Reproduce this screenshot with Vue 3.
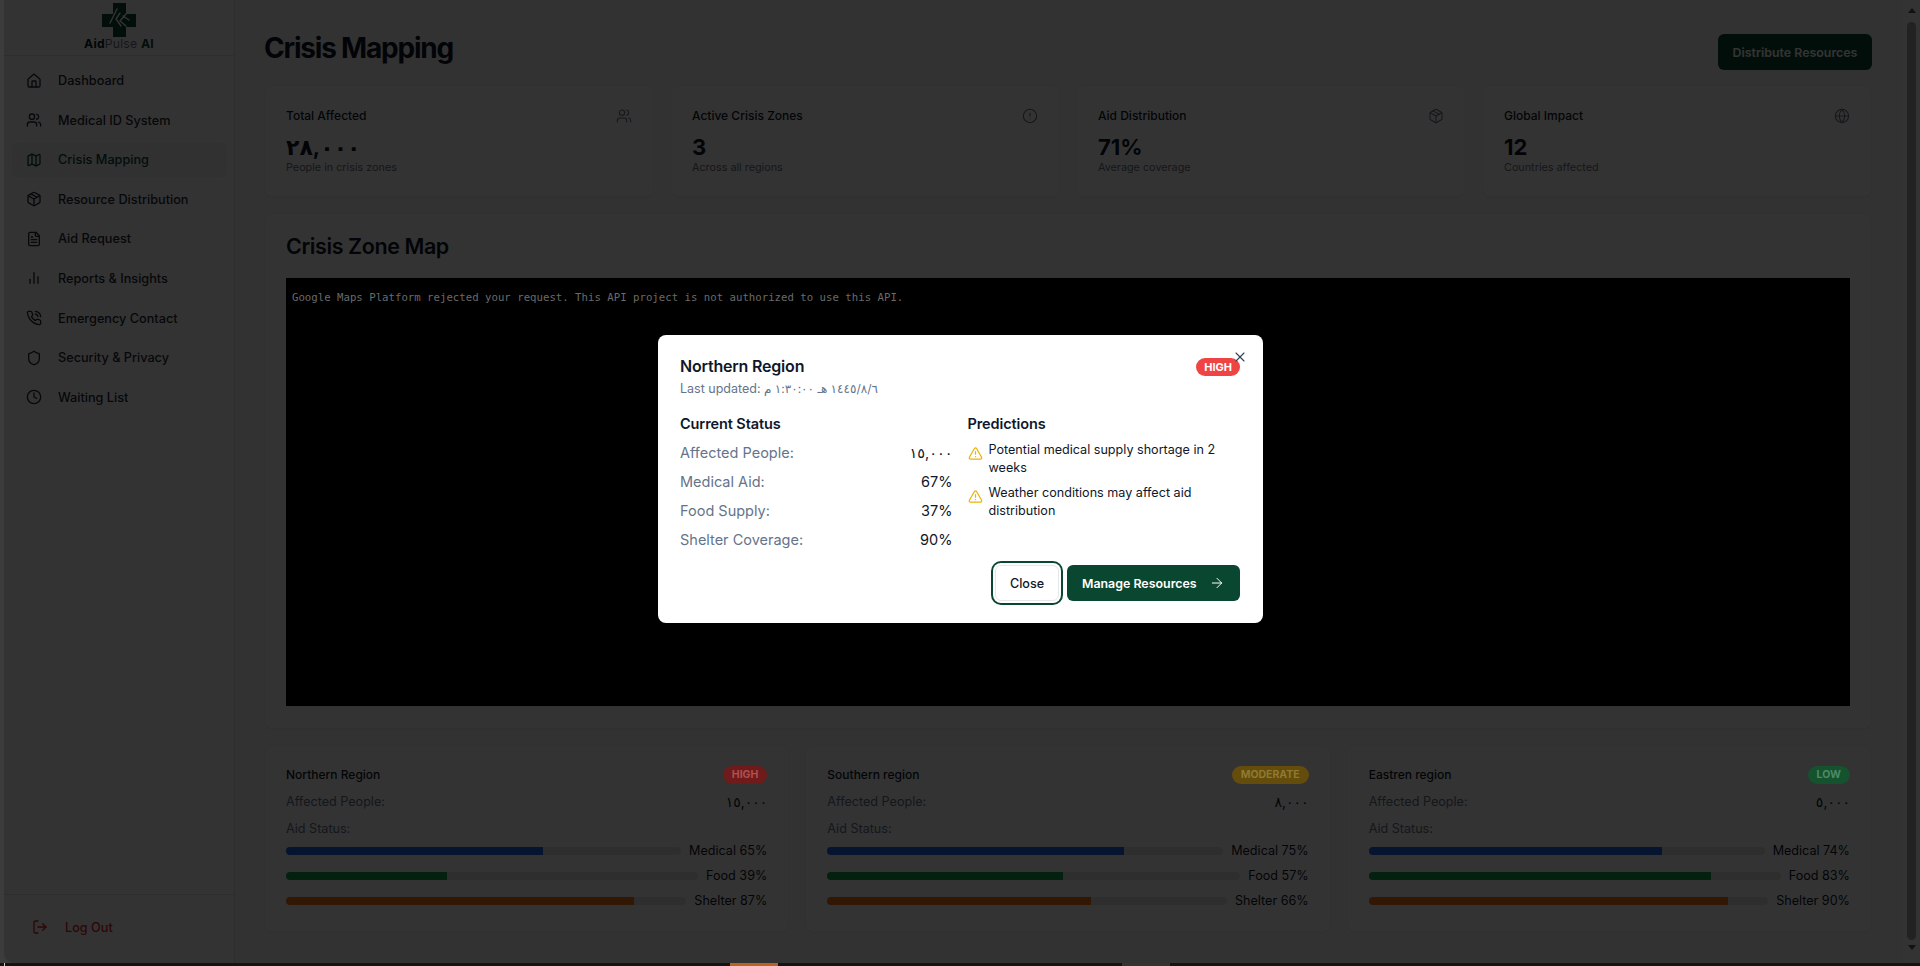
<template>
  <div class="screen">
    <div class="edge"></div>
    <div class="shell">
      <aside class="sidebar">
        <div class="brand">
          <svg class="logo" viewBox="0 0 34 34">
            <path class="logo-cross" d="M11 0h13v11h10v13H24v10H11V24H0V11h11z" />
            <path class="logo-hand" d="M15 6 8 20M18 10l-4 6 5 7M24 11l-6 7 6 5M21 13l6 4" />
          </svg>
          <div class="brand-name"><b>Aid</b><span>Pulse</span> <b class="ai">AI</b></div>
        </div>
        <nav class="nav">
          <a v-for="item in navItems" :key="item.label" class="nav-link" :class="{ active: item.active }">
            <svg class="ico" viewBox="0 0 24 24"><path v-for="d in icons[item.icon]" :key="d" :d="d" /></svg>
            <span>{{ item.label }}</span>
          </a>
        </nav>
        <div class="side-foot">
          <a class="logout">
            <svg class="ico" viewBox="0 0 24 24"><path v-for="d in icons.logout" :key="d" :d="d" /></svg>
            <span>Log Out</span>
          </a>
        </div>
      </aside>

      <main class="main">
        <div class="page-header">
          <h1>Crisis Mapping</h1>
          <button class="btn-distribute">Distribute Resources</button>
        </div>

        <div class="stats">
          <div v-for="s in stats" :key="s.title" class="card stat">
            <div class="stat-top">
              <span>{{ s.title }}</span>
              <svg class="ico stat-ico" viewBox="0 0 24 24"><path v-for="d in icons[s.icon]" :key="d" :d="d" /></svg>
            </div>
            <div class="stat-value">{{ s.value }}</div>
            <div class="stat-sub">{{ s.sub }}</div>
          </div>
        </div>

        <div class="card map-card">
          <h2>Crisis Zone Map</h2>
          <div class="map">
            <span class="map-err">Google Maps Platform rejected your request. This API project is not authorized to use this API.</span>
          </div>
        </div>

        <div class="regions">
          <div v-for="r in regions" :key="r.name" class="card region">
            <div class="region-top">
              <span>{{ r.name }}</span>
              <span class="level" :class="r.level">{{ r.level }}</span>
            </div>
            <div class="region-row">
              <span class="muted">Affected People:</span>
              <span class="arabic-num">{{ r.affected }}</span>
            </div>
            <div class="region-row muted">Aid Status:</div>
            <div class="bars">
              <div v-for="b in r.bars" :key="b.label" class="bar-row">
                <div class="bar-track">
                  <div class="bar-fill" :class="b.color" :style="{ width: b.pct + '%' }"></div>
                </div>
                <span>{{ b.label }} {{ b.pct }}%</span>
              </div>
            </div>
          </div>
        </div>
      </main>

      <div class="scrollbar">
        <i class="arrow up"></i>
        <div class="thumb"></div>
        <i class="arrow down"></i>
      </div>
    </div>

    <div class="taskbar">
      <i class="tick"></i>
      <i class="tab-orange"></i>
      <i class="tab-grey"></i>
    </div>

    <div class="overlay">
      <div class="modal">
        <svg class="modal-x" viewBox="0 0 24 24"><path v-for="d in icons.x" :key="d" :d="d" /></svg>
        <div class="modal-head">
          <div>
            <div class="modal-title">Northern Region</div>
            <div class="modal-date">Last updated: <span class="date-value">١٤٤٥/٨/٦ هـ ١:٣٠:٠٠ م</span></div>
          </div>
          <span class="modal-badge">HIGH</span>
        </div>
        <div class="modal-cols">
          <div>
            <h3>Current Status</h3>
            <div v-for="row in statusRows" :key="row.label" class="status-row">
              <span class="status-label">{{ row.label }}</span>
              <span>{{ row.value }}</span>
            </div>
          </div>
          <div>
            <h3>Predictions</h3>
            <div class="prediction-list">
              <div v-for="p in predictions" :key="p" class="prediction">
                <svg class="warn" viewBox="0 0 24 24"><path v-for="d in icons.warn" :key="d" :d="d" /></svg>
                <span>{{ p }}</span>
              </div>
            </div>
          </div>
        </div>
        <div class="modal-actions">
          <button class="btn-close">Close</button>
          <button class="btn-manage">
            Manage Resources
            <svg class="ico" viewBox="0 0 24 24"><path v-for="d in icons.arrow" :key="d" :d="d" /></svg>
          </button>
        </div>
      </div>
    </div>
  </div>
</template>

<script setup>
const icons = {
  home: ['M15 21v-8a1 1 0 0 0-1-1h-4a1 1 0 0 0-1 1v8', 'M3 10a2 2 0 0 1 .709-1.528l7-5.999a2 2 0 0 1 2.582 0l7 5.999A2 2 0 0 1 21 10v9a2 2 0 0 1-2 2H5a2 2 0 0 1-2-2z'],
  users: ['M16 21v-2a4 4 0 0 0-4-4H6a4 4 0 0 0-4 4v2', 'M13 7a4 4 0 1 1-8 0 4 4 0 0 1 8 0z', 'M22 21v-2a4 4 0 0 0-3-3.87', 'M16 3.13a4 4 0 0 1 0 7.75'],
  map: ['M14.106 5.553a2 2 0 0 0 1.788 0l3.659-1.83A1 1 0 0 1 21 4.619v12.764a1 1 0 0 1-.553.894l-4.553 2.277a2 2 0 0 1-1.788 0l-4.212-2.106a2 2 0 0 0-1.788 0l-3.659 1.83A1 1 0 0 1 3 19.381V6.618a1 1 0 0 1 .553-.894l4.553-2.277a2 2 0 0 1 1.788 0z', 'M15 5.764v15', 'M9 3.236v15'],
  box: ['M11 21.73a2 2 0 0 0 2 0l7-4A2 2 0 0 0 21 16V8a2 2 0 0 0-1-1.73l-7-4a2 2 0 0 0-2 0l-7 4A2 2 0 0 0 3 8v8a2 2 0 0 0 1 1.73z', 'M12 22V12', 'm3.3 7 8.7 5 8.7-5', 'm7.5 4.27 9 5.15'],
  file: ['M15 2H6a2 2 0 0 0-2 2v16a2 2 0 0 0 2 2h12a2 2 0 0 0 2-2V7Z', 'M14 2v4a2 2 0 0 0 2 2h4', 'M10 9H8', 'M16 13H8', 'M16 17H8'],
  chart: ['M18 20V10', 'M12 20V4', 'M6 20v-6'],
  phone: ['M22 16.92v3a2 2 0 0 1-2.18 2 19.79 19.79 0 0 1-8.63-3.07 19.5 19.5 0 0 1-6-6 19.79 19.79 0 0 1-3.07-8.67A2 2 0 0 1 4.11 2h3a2 2 0 0 1 2 1.72 12.84 12.84 0 0 0 .7 2.81 2 2 0 0 1-.45 2.11L8.09 9.91a16 16 0 0 0 6 6l1.27-1.27a2 2 0 0 1 2.11-.45 12.84 12.84 0 0 0 2.81.7A2 2 0 0 1 22 16.92z', 'M14.05 2a9 9 0 0 1 8 7.94', 'M14.05 6A5 5 0 0 1 18 10'],
  shield: ['M20 13c0 5-3.5 7.5-7.66 8.95a1 1 0 0 1-.67-.01C7.5 20.5 4 18 4 13V6a1 1 0 0 1 1-1c2 0 4.5-1.2 6.24-2.72a1.17 1.17 0 0 1 1.52 0C14.51 3.81 17 5 19 5a1 1 0 0 1 1 1z'],
  clock: ['M22 12a10 10 0 1 1-20 0 10 10 0 0 1 20 0z', 'M12 6v6l4 2'],
  logout: ['M9 21H5a2 2 0 0 1-2-2V5a2 2 0 0 1 2-2h4', 'm16 17 5-5-5-5', 'M21 12H9'],
  alert: ['M22 12a10 10 0 1 1-20 0 10 10 0 0 1 20 0z', 'M12 8v4', 'M12 16h.01'],
  globe: ['M22 12a10 10 0 1 1-20 0 10 10 0 0 1 20 0z', 'M12 2a14.5 14.5 0 0 0 0 20 14.5 14.5 0 0 0 0-20', 'M2 12h20'],
  x: ['M18 6 6 18', 'm6 6 12 12'],
  arrow: ['M5 12h14', 'm12 5 7 7-7 7'],
  warn: ['m21.73 18-8-14a2 2 0 0 0-3.48 0l-8 14A2 2 0 0 0 4 21h16a2 2 0 0 0 1.73-3', 'M12 9v4', 'M12 17h.01']
}

const navItems = [
  { label: 'Dashboard', icon: 'home' },
  { label: 'Medical ID System', icon: 'users' },
  { label: 'Crisis Mapping', icon: 'map', active: true },
  { label: 'Resource Distribution', icon: 'box' },
  { label: 'Aid Request', icon: 'file' },
  { label: 'Reports & Insights', icon: 'chart' },
  { label: 'Emergency Contact', icon: 'phone' },
  { label: 'Security & Privacy', icon: 'shield' },
  { label: 'Waiting List', icon: 'clock' }
]

const stats = [
  { title: 'Total Affected', value: '٢٨,٠٠٠', sub: 'People in crisis zones', icon: 'users' },
  { title: 'Active Crisis Zones', value: '3', sub: 'Across all regions', icon: 'alert' },
  { title: 'Aid Distribution', value: '71%', sub: 'Average coverage', icon: 'box' },
  { title: 'Global Impact', value: '12', sub: 'Countries affected', icon: 'globe' }
]

const regions = [
  {
    name: 'Northern Region', level: 'high', affected: '١٥,٠٠٠',
    bars: [
      { label: 'Medical', pct: 65, color: 'blue' },
      { label: 'Food', pct: 39, color: 'green' },
      { label: 'Shelter', pct: 87, color: 'orange' }
    ]
  },
  {
    name: 'Southern region', level: 'moderate', affected: '٨,٠٠٠',
    bars: [
      { label: 'Medical', pct: 75, color: 'blue' },
      { label: 'Food', pct: 57, color: 'green' },
      { label: 'Shelter', pct: 66, color: 'orange' }
    ]
  },
  {
    name: 'Eastren region', level: 'low', affected: '٥,٠٠٠',
    bars: [
      { label: 'Medical', pct: 74, color: 'blue' },
      { label: 'Food', pct: 83, color: 'green' },
      { label: 'Shelter', pct: 90, color: 'orange' }
    ]
  }
]

const statusRows = [
  { label: 'Affected People:', value: '١٥,٠٠٠' },
  { label: 'Medical Aid:', value: '67%' },
  { label: 'Food Supply:', value: '37%' },
  { label: 'Shelter Coverage:', value: '90%' }
]

const predictions = [
  'Potential medical supply shortage in 2 weeks',
  'Weather conditions may affect aid distribution'
]
</script>

<style>
html, body { margin: 0; background: #fff; }
</style>

<style scoped>
.screen {
  position: relative;
  height: 966px;
  overflow: hidden;
  display: flex;
  flex-direction: column;
  font-family: Inter, "DejaVu Sans", sans-serif;
  color: #0f172a;
  background: #f9fafb;
}
.shell { flex: 1; min-height: 0; display: flex; padding-left: 4px; }
.edge {
  position: absolute;
  left: 0;
  top: 0;
  bottom: 3px;
  width: 4px;
  background: #3c3c3c;
  z-index: 60;
}
.edge::after {
  content: "";
  position: absolute;
  left: 4px;
  bottom: 0;
  width: 10px;
  height: 10px;
  background: radial-gradient(circle at 100% 0, transparent 9.5px, #3c3c3c 10.5px);
}
.ico {
  width: 16px;
  height: 16px;
  flex: none;
  fill: none;
  stroke: currentColor;
  stroke-width: 2;
  stroke-linecap: round;
  stroke-linejoin: round;
}

/* sidebar */
.sidebar {
  width: 230px;
  flex: none;
  display: flex;
  flex-direction: column;
  background: #fff;
  border-right: 1px solid #e5e7eb;
}
.brand {
  flex: none;
  height: 52px;
  border-bottom: 1px solid #e5e7eb;
  display: flex;
  flex-direction: column;
  align-items: center;
  padding-top: 3px;
}
.logo { width: 34px; height: 34px; display: block; }
.logo-cross { fill: #0a4731; }
.logo-hand { fill: none; stroke: #fff; stroke-width: 1.4; stroke-linecap: round; }
.brand-name { margin-top: -1px; font-size: 12.2px; line-height: 16px; color: #6b7280; letter-spacing: 0.2px; }
.brand-name b { font-weight: 700; color: #111827; }
.brand-name span { font-weight: 400; }
.brand-name .ai { color: #0a4731; }
.nav {
  flex: 1;
  display: flex;
  flex-direction: column;
  gap: 5.6px;
  padding: 7.5px 7px 0 8px;
}
.nav-link {
  height: 34px;
  display: flex;
  align-items: center;
  gap: 16px;
  padding-left: 14px;
  border-radius: 6px;
  font-size: 12.7px;
  font-weight: 500;
  color: #1f2937;
}
.nav-link.active { background: #f3f4f6; color: #0a4731; }
.side-foot {
  height: 69px;
  flex: none;
  box-sizing: border-box;
  border-top: 1px solid #e5e7eb;
  padding: 23px 0 0 28px;
}
.logout {
  height: 18px;
  display: flex;
  align-items: center;
  gap: 17px;
  font-size: 12.7px;
  font-weight: 500;
  color: #dc2626;
}

/* main column */
.main {
  flex: 1;
  min-width: 0;
  padding: 34px 31px 0 29px;
  display: flex;
  flex-direction: column;
  gap: 16px;
}
.page-header {
  height: 36px;
  margin-bottom: -1px;
  display: flex;
  align-items: center;
  justify-content: space-between;
}
h1 {
  margin: -8.5px 0 0;
  font-size: 28px;
  font-weight: 700;
  letter-spacing: -1.2px;
  color: #0f172a;
}
.btn-distribute {
  width: 154px;
  height: 36px;
  padding: 0;
  border: 0;
  border-radius: 6px;
  background: #0a4731;
  color: #fff;
  font: 600 12.4px Inter, sans-serif;
}
.card {
  box-sizing: border-box;
  background: #fff;
  border: 1px solid #f1f2f4;
  border-radius: 8px;
  box-shadow: 0 1px 2px rgba(0, 0, 0, 0.05);
}
.stats { display: grid; grid-template-columns: repeat(4, 1fr); gap: 16px; }
.stat { height: 112px; padding: 20.5px 21px; }
.stat-top {
  height: 18px;
  display: flex;
  align-items: center;
  justify-content: space-between;
  font-size: 12px;
  font-weight: 500;
}
.stat-ico { color: #6b7280; stroke-width: 1.6; }
.stat-value { margin-top: 8.5px; font-size: 22px; font-weight: 700; line-height: 28px; }
.stat-sub { font-size: 10.8px; line-height: 14px; color: #6b7280; }
.map-card { height: 516px; padding: 16px 21px 0; }
h2 { margin: 0 0 16px; font-size: 21.5px; line-height: 32px; font-weight: 600; letter-spacing: -0.4px; }
.map { height: 428px; background: #000; padding: 7px 6px; box-sizing: border-box; }
.map-err {
  position: relative;
  z-index: 60;
  font: 400 10.7px/14px "DejaVu Sans Mono", monospace;
  color: #6a6a6a;
}
.regions { display: grid; grid-template-columns: repeat(3, 1fr); gap: 16px; }
.region {
  height: 187px;
  padding: 20px 21px 0;
  font-size: 12.6px;
  line-height: 18px;
}
.region-top, .region-row { display: flex; align-items: center; justify-content: space-between; }
.region-top { height: 18px; font-size: 12px; font-weight: 500; }
.region-row { margin-top: 9px; }
.muted { color: #64748b; }
.arabic-num { color: #0f172a; font-size: 14px; }
.level {
  position: relative;
  z-index: 60;
  padding: 0 9px;
  border-radius: 9px;
  font-size: 10.5px;
  font-weight: 700;
  text-transform: uppercase;
  line-height: 18px;
}
.level.high { background: #6f1b1b; color: #b05050; }
.level.moderate { background: #644c0c; color: #8f7a30; }
.level.low { background: #14532d; color: #4d8a66; }
.bars { margin-top: 4px; display: flex; flex-direction: column; gap: 7px; }
.bar-row { display: flex; align-items: center; gap: 8px; }
.bar-track { flex: 1; height: 8px; background: #e5e7eb; border-radius: 4px; overflow: hidden; }
.bar-fill { height: 100%; }
.bar-fill.blue { background: #2563eb; }
.bar-fill.green { background: #16a34a; }
.bar-fill.orange { background: #f97316; }

/* native-looking scrollbar */
.scrollbar {
  width: 17px;
  flex: none;
  position: relative;
  background: #fff;
  display: flex;
  flex-direction: column;
  align-items: center;
  padding: 8px 0 13px;
  box-sizing: border-box;
}
.thumb { flex: 1; width: 9px; margin: 9px 0 5px 0; border-radius: 5px; background: #a8a8a8; }
.arrow { width: 0; height: 0; border-left: 4px solid transparent; border-right: 4px solid transparent; }
.arrow.up { border-bottom: 5px solid #555; }
.arrow.down { border-top: 5px solid #555; }

/* bottom strip of the window */
.taskbar {
  position: relative;
  z-index: 60;
  height: 3px;
  flex: none;
  background: #131313;
}
.taskbar i { position: absolute; top: 0; bottom: 0; }
.tick { left: 4px; width: 1px; background: #ccc; }
.tab-orange { left: 730px; width: 48px; background: #b5651d; }
.tab-grey { left: 1122px; width: 48px; background: #333; }

/* dialog */
.overlay {
  position: absolute;
  inset: 0;
  z-index: 50;
  background: rgba(0, 0, 0, 0.8);
  display: flex;
  align-items: center;
  justify-content: center;
  padding-bottom: 8px;
  box-sizing: border-box;
}
.modal {
  position: relative;
  width: 605px;
  height: 288px;
  box-sizing: border-box;
  padding: 20px 22.5px;
  background: #fff;
  border-radius: 8px;
}
.modal-x {
  position: absolute;
  right: 15px;
  top: 14px;
  width: 16px;
  height: 16px;
  fill: none;
  stroke: #334155;
  stroke-width: 1.6;
  stroke-linecap: round;
}
.modal-head { display: flex; justify-content: space-between; align-items: flex-start; }
.modal-title { font-size: 16px; font-weight: 600; line-height: 22px; letter-spacing: -0.2px; }
.modal-date { margin-top: 3px; font-size: 12.5px; line-height: 18px; color: #64748b; }
.date-value { font-size: 12px; }
.modal-badge {
  padding: 0 8px;
  margin-top: 3px;
  border-radius: 9px;
  background: #ef4444;
  color: #fff;
  font-size: 11px;
  font-weight: 700;
  line-height: 18px;
}
.modal-cols {
  margin-top: 16px;
  display: grid;
  grid-template-columns: 1fr 1fr;
  column-gap: 15px;
}
h3 { margin: 0 0 4px; font-size: 14.5px; font-weight: 600; line-height: 20px; letter-spacing: -0.1px; }
.status-row {
  height: 29px;
  display: flex;
  align-items: center;
  justify-content: space-between;
  font-size: 14.5px;
}
.status-label { color: #64748b; }
.prediction-list { margin-top: 7px; }
.prediction {
  display: flex;
  gap: 6px;
  margin-bottom: 7px;
  font-size: 12.6px;
  line-height: 18px;
}
.warn {
  width: 15px;
  height: 15px;
  flex: none;
  margin-top: 5px;
  fill: none;
  stroke: #eab308;
  stroke-width: 2;
  stroke-linecap: round;
  stroke-linejoin: round;
}
.modal-actions {
  position: absolute;
  right: 22.5px;
  bottom: 22px;
  display: flex;
  gap: 8px;
}
.btn-close, .btn-manage {
  height: 36px;
  border-radius: 6px;
  font: 600 12.4px Inter, sans-serif;
}
.btn-close {
  width: 64px;
  padding: 0;
  background: #fff;
  border: 1px solid #e5e7eb;
  color: #0f172a;
  font-weight: 500;
  font-size: 12.6px;
  box-shadow: 0 0 0 2px #fff, 0 0 0 4px #0a4731;
}
.btn-manage {
  width: 173px;
  padding: 0 15px;
  border: 0;
  background: #0a4731;
  color: #fff;
  display: flex;
  align-items: center;
  justify-content: space-between;
}
.btn-manage .ico { stroke-width: 1.5; }
</style>
